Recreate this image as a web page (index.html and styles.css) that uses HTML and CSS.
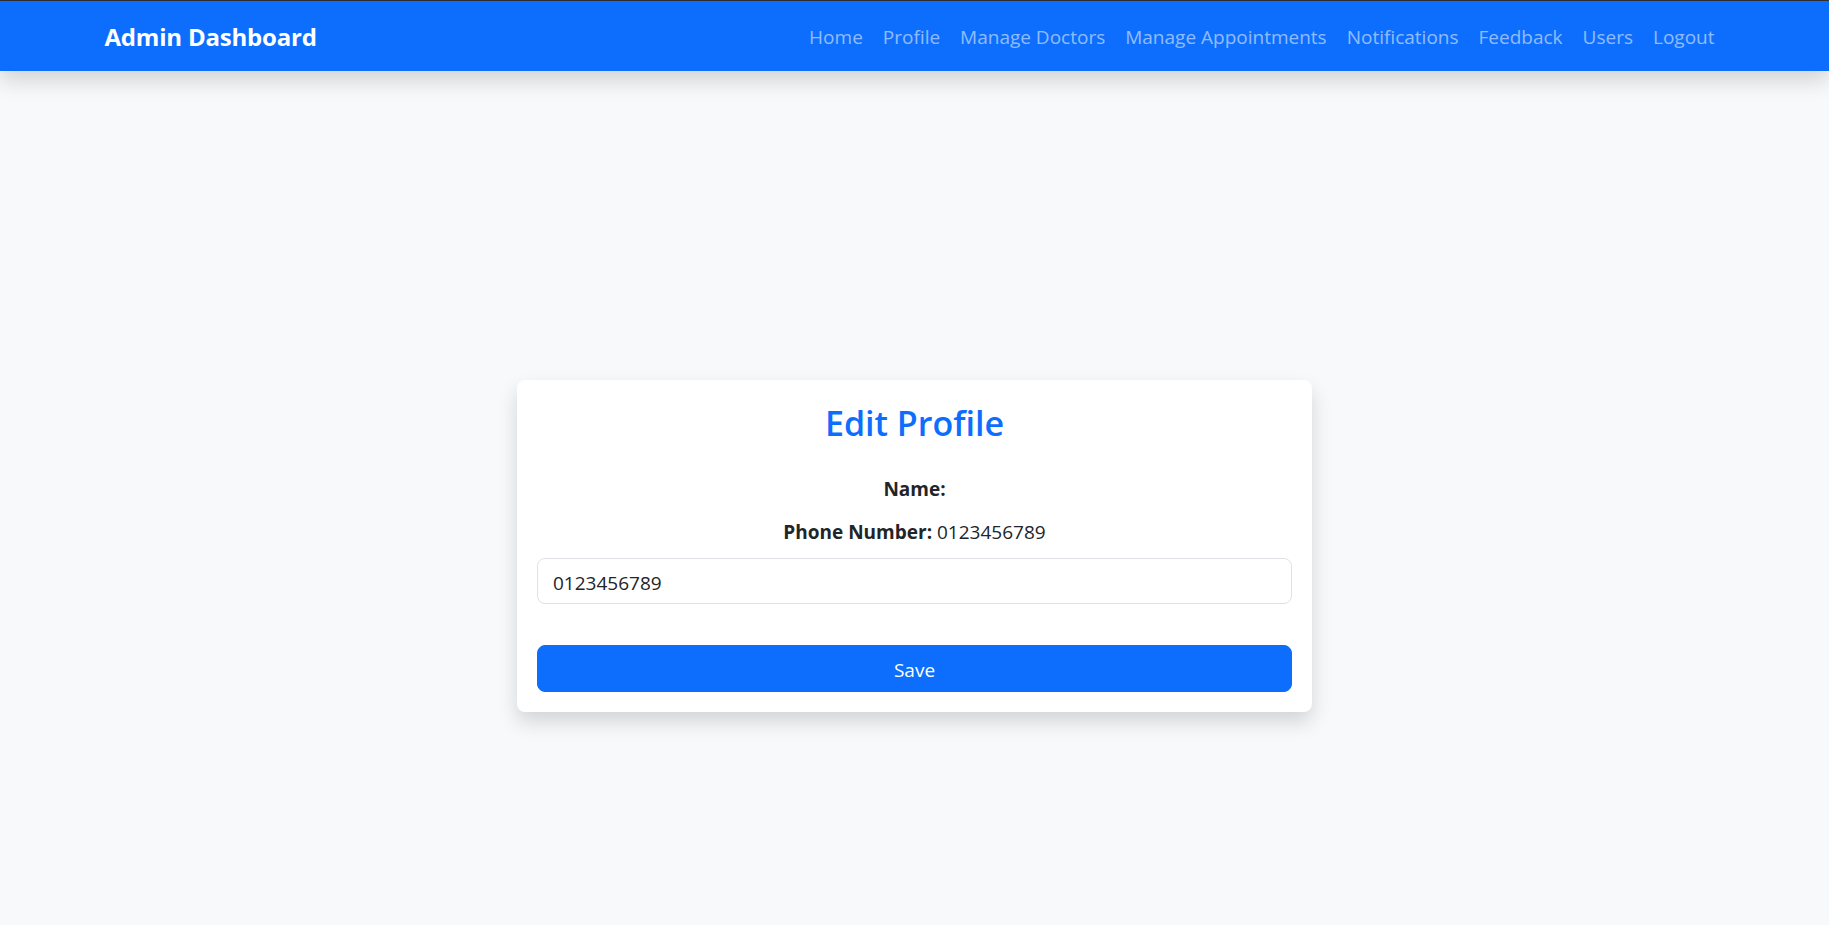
FILE: index.html
```html
<!DOCTYPE html>
<html lang="en">
<head>
<meta charset="utf-8">
<title>Admin Dashboard - Edit Profile</title>
<link rel="stylesheet" href="styles.css">
</head>
<body>
<nav class="navbar">
  <div class="nav-container">
    <a class="brand" href="#">Admin Dashboard</a>
    <ul class="nav-links">
      <li><a href="#">Home</a></li>
      <li><a href="#">Profile</a></li>
      <li><a href="#">Manage Doctors</a></li>
      <li><a href="#">Manage Appointments</a></li>
      <li><a href="#">Notifications</a></li>
      <li><a href="#">Feedback</a></li>
      <li><a href="#">Users</a></li>
      <li><a href="#">Logout</a></li>
    </ul>
  </div>
</nav>
<main class="main">
  <div class="card">
    <h3 class="card-title">Edit Profile</h3>
    <p class="info"><strong>Name:</strong> </p>
    <p class="info"><strong>Phone Number:</strong> 0123456789</p>
    <form class="form">
      <input class="form-control" type="text" value="0123456789">
      <button class="btn" type="button">Save</button>
    </form>
  </div>
</main>
</body>
</html>
```
FILE: styles.css
```css
* { box-sizing: border-box; }
html, body {
  margin: 0;
  padding: 0;
}
body {
  background: #f8f9fa;
  color: #212529;
  font-family: "Open Sans", "Noto Sans", sans-serif;
  font-size: 20px;
  line-height: 1.5;
  min-height: 925px;
}
.navbar {
  background: #0d6efd;
  border-top: 1px solid #2e2e2e;
  height: 71px;
  box-shadow: 0 10px 20px rgba(0, 0, 0, 0.15);
  display: flex;
  align-items: center;
  position: relative;
}
.nav-container {
  width: 1650px;
  margin: 0 auto;
  padding: 2px 15px 0;
  display: flex;
  align-items: center;
  justify-content: space-between;
}
.brand {
  color: #fff;
  font-weight: 700;
  font-size: 24px;
  line-height: 37.5px;
  text-decoration: none;
  letter-spacing: -0.2px;
}
.nav-links {
  list-style: none;
  margin: 0;
  padding: 0;
  display: flex;
}
.nav-links a {
  display: block;
  padding: 0 10px;
  line-height: 30px;
  font-size: 19px;
  color: rgba(255, 255, 255, 0.55);
  text-decoration: none;
}
.main {
  padding-top: 309px;
  display: flex;
  justify-content: center;
}
.card {
  width: 795px;
  background: #fff;
  border-radius: 8px;
  padding: 20px;
  box-shadow: 0 10px 20px rgba(0, 0, 0, 0.15);
  text-align: center;
}
.card-title {
  margin: 0 0 28px;
  padding-top: 2px;
  font-size: 34px;
  font-weight: 600;
  line-height: 42px;
  color: #0d6efd;
}
.info {
  margin: 0 0 11px;
  padding-top: 2px;
  line-height: 30px;
  font-size: 19px;
}
.info strong { font-weight: 700; }
.form {
  display: flex;
  flex-direction: column;
  gap: 41px;
  text-align: left;
}
.form-control {
  display: block;
  width: 100%;
  height: 46px;
  padding: 3px 15px 0;
  font-family: inherit;
  font-size: 19px;
  color: #212529;
  background: #fff;
  border: 1px solid #dee2e6;
  border-radius: 8px;
  outline: none;
}
.btn {
  display: block;
  width: 100%;
  height: 47px;
  padding: 3px 0 0;
  font-family: inherit;
  font-size: 19px;
  color: #fff;
  background: #0d6efd;
  border: 1px solid #0d6efd;
  border-radius: 8px;
  cursor: pointer;
}
```
